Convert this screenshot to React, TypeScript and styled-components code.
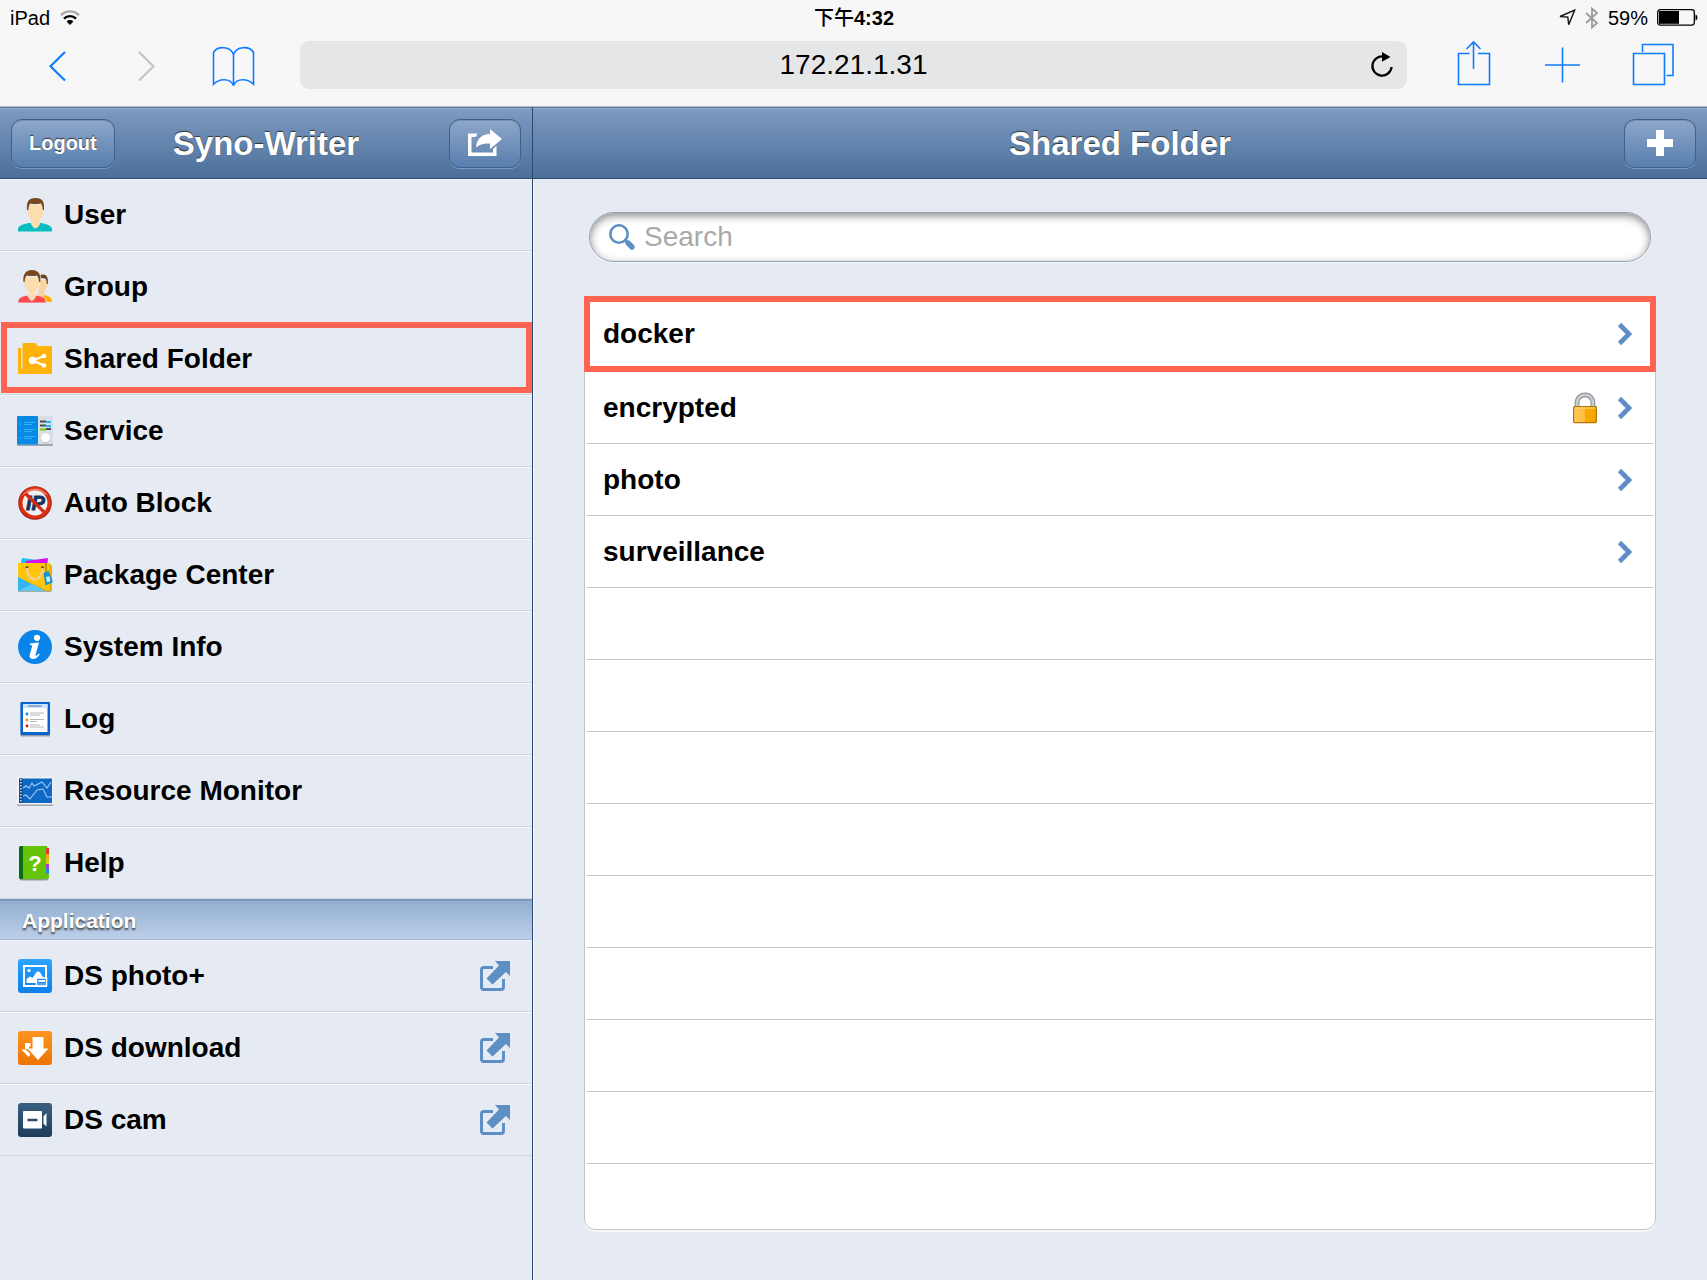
import React from "react";
import styled, { createGlobalStyle, css } from "styled-components";

const GlobalStyle = createGlobalStyle`
  *, *::before, *::after { box-sizing: border-box; }
  body {
    margin: 0;
    background: #e6ebf3;
    color: #000;
    font-family: "Liberation Sans", "Noto Sans CJK TC", Helvetica, Arial, sans-serif;
  }
  svg { display: block; flex: none; overflow: visible; }
  button, input { font: inherit; }
  a { color: inherit; text-decoration: none; }
  ul { list-style: none; margin: 0; padding: 0; }
`;

const ACCENT = "#0f7bff";
const STEEL = "#5d8ec4";

/* ---------- page ---------- */

const Page = styled.div`
  display: flex;
  flex-direction: column;
  min-height: 100vh;
`;

const Chrome = styled.header`
  background: #f7f7f7;
  border-bottom: 1px solid #b4b9c6;
`;

const StatusBar = styled.div`
  display: grid;
  grid-template-columns: 1fr auto 1fr;
  align-items: center;
  height: 32px;
  padding: 3px 9px 0 10px;
  font-size: 20px;
  line-height: 24px;
`;

const StatusGroup = styled.div<{ $end?: boolean }>`
  display: flex;
  align-items: center;
  gap: ${(p) => (p.$end ? 9 : 10)}px;
  justify-content: ${(p) => (p.$end ? "flex-end" : "flex-start")};
`;

const Clock = styled.time`
  font-weight: 500;
  b { font-weight: 700; }
`;

const Toolbar = styled.div`
  display: flex;
  gap: 22px;
  padding: 9px 14px 17px;
`;

const ToolGroup = styled.div`
  display: flex;
`;

const ToolButton = styled.button`
  display: flex;
  align-items: center;
  justify-content: center;
  width: 88px;
  height: 48px;
  padding: 0;
  border: 0;
  background: none;
  color: ${ACCENT};

  &:disabled { color: #c3c3c3; }
`;

const AddressBar = styled.div`
  display: flex;
  flex: 1;
  align-items: center;
  height: 48px;
  padding: 0 14px 0 36px;
  border-radius: 9px;
  background: #e5e6e8;
`;

const AddressInput = styled.input`
  flex: 1;
  min-width: 0;
  padding: 0;
  border: 0;
  outline: 0;
  background: none;
  color: #000;
  font-size: 28px;
  line-height: 32px;
  text-align: center;
`;

const ReloadButton = styled.button`
  display: flex;
  padding: 0;
  border: 0;
  background: none;
  color: #000;
`;

const Workspace = styled.div`
  display: flex;
  flex: 1;
`;

const Sidebar = styled.aside`
  display: flex;
  flex-direction: column;
  flex: none;
  width: 533px;
  border-right: 1px solid #2a4a72;
`;

const Main = styled.main`
  display: flex;
  flex: 1;
  flex-direction: column;
  min-width: 0;
  box-shadow: inset 1px 0 #f5f7fa;
`;

const TitleBar = styled.div`
  display: grid;
  grid-template-columns: 1fr auto 1fr;
  align-items: center;
  height: 72px;
  padding: 0 11px;
  border-top: 1px solid #5f7ca6;
  border-bottom: 1px solid #2c4a73;
  background: linear-gradient(#7d9bc3, #4b6f99);
  box-shadow: inset 0 1px #8fa9cc;
`;

const Title = styled.h1`
  grid-column: 2;
  margin: 0;
  padding-top: 1px;
  color: #fff;
  font-size: 33px;
  font-weight: 700;
  line-height: 38px;
  text-shadow: 0 -1px 1px #333;
`;

const BarButton = styled.button<{ $end?: boolean }>`
  display: flex;
  align-items: center;
  justify-content: center;
  justify-self: ${(p) => (p.$end ? "end" : "start")};
  min-width: 72px;
  height: 49px;
  padding: 0 17px;
  border: 1px solid #3f6088;
  border-radius: 11px;
  background: linear-gradient(#8ea7c9, #587fb0);
  box-shadow: 0 1px #7f9cc0, inset 0 1px #7792b8;
  color: #fff;
  font-size: 20px;
  font-weight: 700;
  text-shadow: 0 -1px 1px #333;
`;

/* ---------- sidebar ---------- */

const Highlight = css`
  &::after {
    content: "";
    position: absolute;
    border: 6px solid #ff6352;
    pointer-events: none;
    z-index: 1;
  }
`;

const NavRow = styled.li<{ $marked?: boolean }>`
  position: relative;
  height: 72px;
  border-bottom: 1px solid #cfd6e1;
  box-shadow: inset 0 1px #f5f7fb;
  ${(p) => p.$marked && Highlight}
  &::after { inset: -1px 0 1px 1px; }
`;

const NavLink = styled.a`
  display: flex;
  align-items: center;
  gap: 12px;
  height: 100%;
  padding: 0 22px 0 18px;
  font-size: 28px;
  font-weight: 700;
  line-height: 32px;
`;

const NavLabel = styled.span`
  flex: 1;
`;

const SectionHeading = styled.h2`
  height: 41px;
  margin: 0;
  padding-left: 22px;
  border-top: 2px solid #7b98bf;
  border-bottom: 1px solid #9db5d6;
  background: linear-gradient(#93aed0, #bccfe9);
  color: #fff;
  font-size: 21px;
  font-weight: 700;
  line-height: 40px;
  text-shadow: 0 2px 2px #444;
`;

/* ---------- folder list ---------- */

const Content = styled.div`
  display: flex;
  flex-direction: column;
  gap: 34px;
  padding: 33px 51px 49px;
`;

const SearchBox = styled.label`
  display: flex;
  align-items: center;
  gap: 9px;
  height: 50px;
  margin: 0 5px;
  padding: 0 19px;
  border: 1px solid #96a0aa;
  border-radius: 25px;
  background: #fff;
  box-shadow: inset 0 3px 9px rgba(0, 0, 0, 0.45), 0 1px #f4f6fa;
`;

const SearchInput = styled.input`
  flex: 1;
  min-width: 0;
  padding: 0;
  border: 0;
  outline: 0;
  background: none;
  font-size: 28px;
  line-height: 32px;

  &::placeholder { color: #a9a9a9; opacity: 1; }
`;

const FolderList = styled.ul`
  padding: 0 2px;
  border: 1px solid #c3c6ca;
  border-radius: 11px;
  background: #fff;
  box-shadow: 0 2px #f6f8fb;
`;

const FolderRow = styled.li<{ $marked?: boolean }>`
  position: relative;
  height: 72px;
  border-bottom: 1px solid #c8c8c8;

  &:first-child { height: 75px; }
  &:last-child { height: 65px; border-bottom: 0; }
  ${(p) => p.$marked && Highlight}
  &::after { inset: -1px -3px; }
`;

const FolderLink = styled.a`
  display: flex;
  align-items: center;
  gap: 21px;
  height: 100%;
  padding: 0 21px 0 16px;
  font-size: 28px;
  font-weight: 700;
  line-height: 32px;
`;

const FolderName = styled.span`
  flex: 1;
`;

/* ---------- status icons ---------- */

const WifiIcon = () => (
  <svg width="20" height="16" viewBox="0 0 20 16" fill="none">
    <path d="M1 5.2C6 .2 14 .2 19 5.2" stroke="#a6a6a6" strokeWidth="2.2" />
    <path d="M4 8.6c3.300-3.300 8.700-3.300 12 0" stroke="#000" strokeWidth="2.400" />
    <path d="M6.600 11.400c2-1.800 4.800-1.800 6.800 0L10 15z" fill="#000" />
  </svg>
);

const LocationIcon = () => (
  <svg width="17" height="17" viewBox="0 0 17 17" fill="none" stroke="#111" strokeWidth="1.400">
    <path d="M15.600 1.200 1 7.500l7.800.6.900 7.600z" strokeLinejoin="miter" />
  </svg>
);

const BluetoothIcon = () => (
  <svg width="14" height="22" viewBox="0 0 14 22" fill="none" stroke="#9b9b9b" strokeWidth="1.800">
    <path d="M1 6l11 10-5 4.500V1.500L12 6 1 16" />
  </svg>
);

const BatteryIcon = () => (
  <svg width="41" height="17" viewBox="0 0 41 17">
    <rect x=".7" y=".7" width="36.600" height="15.400" rx="2.500" fill="none" stroke="#000" strokeWidth="1.300" />
    <rect x="2" y="2" width="20" height="12.800" fill="#000" />
    <path d="M38.500 5.500c2.600.6 2.600 5.400 0 6z" fill="#000" />
  </svg>
);

/* ---------- browser icons ---------- */

const toolStroke = { fill: "none", stroke: "currentColor", strokeWidth: 1.6 };

const BackIcon = () => (
  <svg width="48" height="48" viewBox="0 0 48 48" {...toolStroke} strokeWidth="2.200">
    <path d="M31 11 16.500 25.200 31 39.500" />
  </svg>
);
const ForwardIcon = () => (
  <svg width="48" height="48" viewBox="0 0 48 48" {...toolStroke} strokeWidth="2.200">
    <path d="M17 11l14.500 14.200L17 39.500" />
  </svg>
);
const BookIcon = () => (
  <svg width="48" height="48" viewBox="0 0 48 48" {...toolStroke}>
    <path d="M23.500 45V13.500C20.500 4.500 7 5 3.500 11.500v31.800C9 37.500 20 36.500 23.500 44.500zM23.500 45V13.500C26.500 4.500 40 5 43.500 11.500v31.800C38 37.500 27 36.500 23.500 44.500z" />
  </svg>
);
const ShareIcon = () => (
  <svg width="48" height="48" viewBox="0 0 48 48" {...toolStroke}>
    <path d="M20.500 12.500h-11v31h31v-31h-11.500M24.500 1v27M17.500 8l7-7 7 7" />
  </svg>
);
const AddTabIcon = () => (
  <svg width="48" height="48" viewBox="0 0 48 48" {...toolStroke}>
    <path d="M25.500 6.500v35M8 24h35" />
  </svg>
);
const TabsIcon = () => (
  <svg width="48" height="48" viewBox="0 0 48 48" {...toolStroke}>
    <path d="M8.500 12.500h31v31h-31zM17.500 11V3.500h30.500v31H41.500" />
  </svg>
);
const ReloadIcon = () => (
  <svg width="22" height="26" viewBox="0 0 22 26" fill="none">
    <path d="M12.500 4.500A9.600 9.600 0 1 0 20.600 15" stroke="#000" strokeWidth="2.300" />
    <path d="M11 0l8.500 5-8.500 4.800z" fill="#000" />
  </svg>
);

/* ---------- title bar icons ---------- */

const ForwardBoxIcon = () => (
  <svg width="34" height="28" viewBox="0 0 34 28" fill="#fff">
    <path d="M0 4.500h9V6L7.500 8H3.500v15.500h21.500V20l3.500-3.500V27H0z" />
    <path d="M22 0l12 10-12 10v-5.500c-6-.5-10.500 1-14 4C8.500 11 13 5 22 5z" />
  </svg>
);
const PlusIcon = () => (
  <svg width="26" height="26" viewBox="0 0 26 26">
    <path d="M9 0h8v9h9v8h-9v9H9v-9H0V9h9z" fill="#fff" />
  </svg>
);

/* ---------- sidebar icons ---------- */

const Tile: React.FC<{ children: React.ReactNode }> = ({ children }) => (
  <svg width="34" height="34" viewBox="0 0 34 34" aria-hidden="true">
    {children}
  </svg>
);

const UserIcon = () => (
  <Tile>
    <path d="M0 33.500v-2c0-4 5-5.500 11-6.500h12c6 1 11 2.500 11 6.500v2z" fill="#08bdbd" />
    <path d="M10 7h15l.5 7c-.4 4-2.500 6-3.500 8v4c-1 2.500-3 4-4.500 4.500-1.500-.5-3.500-2-4.500-4.500v-4c-1-2-3-4-3.500-8z" fill="#fddcae" />
    <path d="M9 12C8.500 4 10 0 17.500 0S26.500 4 26 12h-1.200c0-3-.8-5-2-6.500-3 .8-8 .8-10.600 0C11 7 10.500 9 10.400 12z" fill="#79481f" />
  </Tile>
);
const GroupIcon = () => (
  <Tile>
    <path d="M26 25c4 .8 8 2 8 6.500V32h-5.500c-.3-2.500-2-4-4.500-5z" fill="#ffb000" />
    <path d="M22 10l7.500.5c1 4-.5 7-3 10v4.500L24 27l-4-2z" fill="#f9d3a0" />
    <path d="M22.500 5c5-1.500 8 .5 7.300 9h-1c0-2.500-.5-4-1.500-5.500L23 8z" fill="#6a4220" />
    <path d="M0 33v-1.500C0 27 5 26 10 25h8c5 1 10 2 10 6.500V33z" fill="#ff4d4f" stroke="#e6ebf3" strokeWidth=".8" />
    <path d="M6 7h15.500c.8 8-.5 11-3.800 14.500V26c-1 2.500-2.500 4-3.900 4.500C12.500 30 11 28.500 10 26v-4.500C6.500 18 5.200 14 6 7z" fill="#fddcae" stroke="#e6ebf3" strokeWidth=".8" />
    <path d="M5.500 12C4.500 4 8 0 14 0s9.500 4 8.200 12H21c0-3-.8-5-2-6.500-3 .8-7.500.8-10.300 0C7.300 7 6.700 9 6.700 12z" fill="#79481f" />
  </Tile>
);
const SharedFolderIcon = () => (
  <Tile>
    <path d="M0 6.500Q0 6 1 6h2.300v21H4.500V3Q4.500 1 6 1h12l1.500 3H33q1 0 1 1v26q0 1-1 1H1q-1 0-1-1z" fill="#ffb20a" />
    <path d="M14.500 18.500 26 14M14.500 18.500l11.500 5" stroke="#fff" strokeWidth="2" />
    <circle cx="14.500" cy="18.500" r="3.700" fill="#fff" />
    <circle cx="26" cy="14" r="2.300" fill="#fff" />
    <circle cx="26" cy="23.500" r="2.300" fill="#fff" />
  </Tile>
);
const ServiceIcon = () => (
  <Tile>
    <rect x="-1" y="3" width="36" height="29" rx="1" fill="#a0a6ac" />
    <rect x="19" y="2" width="16" height="28" rx="1" fill="#d9dee4" />
    <rect x="-1" y="2" width="21" height="28.500" rx="1" fill="#068ae6" />
    <path d="M1 10h2M6 8.500h11M6 10.500h8M1 17h2M6 15.500h11M6 17.500h8M1 24h2M6 22.500h11M6 24.500h8" stroke="#3fb2fa" strokeWidth=".9" />
    <path d="M22 7.500h6M22 11.500h6M28 15h5" stroke="#47505a" strokeWidth="2" />
    <path d="M28 8h5M28 12h5" stroke="#22b7f5" strokeWidth="2.200" />
    <path d="M22 15.500h6" stroke="#71d117" strokeWidth="2.200" />
    <circle cx="27.500" cy="24.500" r="4.500" fill="#a9b0b7" />
    <circle cx="27.500" cy="23.800" r="4.500" fill="#fff" />
  </Tile>
);
const AutoBlockIcon = () => (
  <Tile>
    <circle cx="17" cy="17" r="16.800" fill="#a52015" />
    <circle cx="17" cy="16.700" r="15.900" fill="#da2f12" />
    <path d="M4 10a15 15 0 0 1 26 0c-6-5-20-5-26 0z" fill="#ee7768" />
    <circle cx="17" cy="17" r="12.500" fill="#f1f0ef" />
    <text x="17.500" y="24" textAnchor="middle" fontSize="20" fontWeight="700" fontStyle="italic" fill="#17305f" stroke="#17305f" strokeWidth=".8">IP</text>
    <path d="M7.500 7.500l19 19" stroke="#d42b12" strokeWidth="3.200" />
  </Tile>
);
const PackageIcon = () => (
  <Tile>
    <path d="M4 0l15 2-1 6H2z" fill="#19c3ee" />
    <path d="M8 3l22-3-1 9H7z" fill="#d80df0" />
    <path d="M0 32h33v2H0z" fill="#a9a9a4" />
    <path d="M0 5h31.500L34 8v25H0z" fill="#e2b10c" />
    <path d="M0 5h31.500v28L0 19z" fill="#ffc60d" />
    <path d="M0 19l27 14H0z" fill="#35b4f0" />
    <path d="M0 33l14-7 13 7z" fill="#5cc9fb" />
    <circle cx="9" cy="9.500" r="1.500" fill="#704a0c" />
    <circle cx="24.500" cy="9.500" r="1.500" fill="#704a0c" />
    <path d="M9 10c0 15 15.500 15 15.500 0" fill="none" stroke="#f6cf9c" strokeWidth="2.200" />
    <path d="M28 5v9" stroke="#7b6a22" />
    <path d="M25.500 15l5-2 4.500 11-7.500 3.500z" fill="#1393d4" />
    <path d="M28 19l3.500-.8.800 5-3.300 1z" fill="#d5f1ff" />
  </Tile>
);
const InfoIcon = () => (
  <Tile>
    <circle cx="17" cy="17" r="17" fill="#0a84e9" />
    <circle cx="19" cy="7.800" r="3.100" fill="#fff" />
    <path d="M12 13.500l9-1-3.500 12.200c-.3 1.300.6 1.300 1.500.5l1.800-1.700.9.800c-2.300 3.300-4.400 4.800-6.800 4.800-2.600 0-3.800-1.700-3.200-4l2.400-8.500c.3-1.200-.3-1.500-2.300-1.600z" fill="#fff" />
  </Tile>
);
const LogIcon = () => (
  <Tile>
    <rect x="2.500" y="1" width="29.500" height="33.500" rx="1" fill="#969ba2" />
    <rect x="2.500" y="0" width="29.500" height="33" rx="1" fill="#0864cf" />
    <path d="M5 2h24.500v28H5z" fill="#fff" />
    <path d="M5 2h24.500v4H5z" fill="#cfe5fb" />
    <path d="M10 4h14" stroke="#7f9dc0" strokeWidth="1.500" />
    <circle cx="9" cy="12" r="1.400" fill="#0b84ee" />
    <circle cx="9" cy="18" r="1.400" fill="#f58a0b" />
    <circle cx="9" cy="24" r="1.400" fill="#d80f0f" />
    <path d="M12 11h14M12 13h10M12 17.500h14M12 19.500h7M12 23h10M12 25h14" stroke="#b3b7bb" />
  </Tile>
);
const MonitorIcon = () => (
  <Tile>
    <rect x="-1" y="3.500" width="36" height="28.500" fill="#9fa5ab" />
    <rect x="-1" y="3" width="36" height="27.500" fill="#f1f3f5" />
    <rect x="1" y="4.500" width="33" height="24.500" fill="#0d69c4" />
    <rect x="1" y="4.500" width="3.500" height="24.500" fill="#12437c" />
    <path d="M2.800 5v24" stroke="#b9cde4" strokeWidth="1.800" strokeDasharray="1.500 1.500" />
    <path d="M5 14l3-2 3 2 3-5 2 3 8-4 5 6 4-6M5 22l3-1 4 4 7-9 6-1 4 8h5" fill="none" stroke="#9fcaf5" strokeWidth="1.100" />
  </Tile>
);
const HelpIcon = () => (
  <Tile>
    <rect x="1.500" y="1" width="29" height="33.500" rx="2" fill="#8f9b8c" />
    <path d="M27 2h4v6h-4z" fill="#e83030" />
    <path d="M27 8h4v5h-4z" fill="#f8a018" />
    <path d="M27 13h4v5h-4z" fill="#d4d413" />
    <path d="M27 18h4v5h-4z" fill="#a33fd2" />
    <path d="M27 23h4v5h-4z" fill="#1b8fe6" />
    <path d="M1 2q0-2 2-2h26v2l-1 1v24l3 2v2q0 2-2 2H3q-2 0-2-2z" fill="#66c408" />
    <path d="M1 2q0-2 2-2h2v33H3q-2 0-2-2z" fill="#0b6a12" />
    <text x="17" y="25" textAnchor="middle" fontSize="22" fontWeight="700" fill="#fff">?</text>
  </Tile>
);

const AppTile: React.FC<{ id: string; from: string; to: string; children: React.ReactNode }> = ({ id, from, to, children }) => (
  <Tile>
    <defs>
      <linearGradient id={id} x1="0" y1="0" x2="0" y2="1">
        <stop offset="0" stopColor={from} />
        <stop offset="1" stopColor={to} />
      </linearGradient>
    </defs>
    <rect width="34" height="34" rx="3" fill={`url(#${id})`} />
    {children}
  </Tile>
);
const PhotoIcon = () => (
  <AppTile id="photo-tile" from="#2ea3ff" to="#0c80e8">
    <rect x="6" y="7" width="22" height="20" fill="none" stroke="#fff" strokeWidth="2" />
    <circle cx="11" cy="11.500" r="1.600" fill="#fff" />
    <path d="M8.500 24v-4l3.500-2.500 2.500 1.500 4-6c1.500-1 3-.5 4 1l3 5v2H18v3z" fill="#fff" />
    <rect x="18.500" y="19" width="10" height="8" fill="#1788ec" stroke="#fff" strokeWidth="1.600" />
    <path d="M20.500 22h6.500" stroke="#fff" strokeWidth="2" />
    <path d="M20.500 25h6.500" stroke="#fff" strokeDasharray="1 1" />
  </AppTile>
);
const DownloadIcon = () => (
  <AppTile id="download-tile" from="#ff9420" to="#ec7403">
    <path d="M14.500 6h11v11.500h5L20 29 9.500 17.500h5z" fill="#fff" />
    <path d="M7 12h5.500v3.500H11V18H7.500l5 5.500-2 2.500L3.500 18.500H7z" fill="#fff" />
  </AppTile>
);
const CamIcon = () => (
  <AppTile id="cam-tile" from="#3a5f81" to="#1e3d5c">
    <rect x="5" y="8" width="19" height="17.500" rx="1" fill="#fff" />
    <path d="M9.500 17h10" stroke="#2a4b6b" strokeWidth="2.500" />
    <path d="M25.500 13.500 28.500 10v13.500l-3-3z" fill="#fff" />
  </AppTile>
);

const OpenIcon = () => (
  <svg width="30" height="30" viewBox="0 0 30 30" aria-hidden="true">
    <path d="M13 6.500H4Q1.500 6.500 1.500 9v17q0 2.500 2.500 2.500h17q2.500 0 2.500-2.500v-8" fill="none" stroke={STEEL} strokeWidth="3" />
    <path d="M15 0h15v15l-4-4-13.500 12.500L6.500 17.500 19 4.500z" fill={STEEL} />
  </svg>
);

/* ---------- list icons ---------- */

const SearchIcon = () => (
  <svg width="26" height="26" viewBox="0 0 26 26" fill="none" stroke={STEEL} aria-hidden="true">
    <circle cx="10" cy="10" r="8.700" strokeWidth="2.600" />
    <path d="M16.200 16.200 19 19" strokeWidth="3" />
    <path d="M19 19l4 4" strokeWidth="5.400" strokeLinecap="round" />
  </svg>
);
const ChevronIcon = () => (
  <svg width="14" height="22" viewBox="0 0 14 22" fill="none" aria-hidden="true">
    <path d="M1.500 1.500 11 11l-9.500 9.500" stroke={STEEL} strokeWidth="4.600" />
  </svg>
);
const LockIcon = () => (
  <svg width="24" height="32" viewBox="0 0 24 32" role="img" aria-label="Encrypted">
    <defs>
      <linearGradient id="lock-body">
        <stop offset="0" stopColor="#fdc95a" />
        <stop offset=".48" stopColor="#fcbd3a" />
        <stop offset=".5" stopColor="#f8aa05" />
        <stop offset="1" stopColor="#f6a600" />
      </linearGradient>
    </defs>
    <path d="M4 16v-5C4 7 7 2.800 12 2.800S20 7 20 11v5" fill="none" stroke="#85898d" strokeWidth="4.800" />
    <path d="M4 16v-5C4 7 7 2.800 12 2.800S20 7 20 11v5" fill="none" stroke="#c9cdd1" strokeWidth="2.800" />
    <rect x=".6" y="14.600" width="22.800" height="16" rx="1" fill="url(#lock-body)" stroke="#b37505" strokeWidth="1.200" />
    <path d="M2 16h20" stroke="#ffe09a" />
  </svg>
);

/* ---------- data ---------- */

const systemItems = [
  { label: "User", Icon: UserIcon },
  { label: "Group", Icon: GroupIcon },
  { label: "Shared Folder", Icon: SharedFolderIcon, marked: true },
  { label: "Service", Icon: ServiceIcon },
  { label: "Auto Block", Icon: AutoBlockIcon },
  { label: "Package Center", Icon: PackageIcon },
  { label: "System Info", Icon: InfoIcon },
  { label: "Log", Icon: LogIcon },
  { label: "Resource Monitor", Icon: MonitorIcon },
  { label: "Help", Icon: HelpIcon },
];

const appItems = [
  { label: "DS photo+", Icon: PhotoIcon },
  { label: "DS download", Icon: DownloadIcon },
  { label: "DS cam", Icon: CamIcon },
];

const folders = [
  { name: "docker", marked: true },
  { name: "encrypted", locked: true },
  { name: "photo" },
  { name: "surveillance" },
];

const EMPTY_ROWS = 9;

export default function App() {
  return (
    <>
      <GlobalStyle />
      <Page>
        <Chrome>
          <StatusBar>
            <StatusGroup>
              <span>iPad</span>
              <WifiIcon />
            </StatusGroup>
            <Clock>下午<b>4:32</b></Clock>
            <StatusGroup $end>
              <LocationIcon />
              <BluetoothIcon />
              <span>59%</span>
              <BatteryIcon />
            </StatusGroup>
          </StatusBar>
          <Toolbar>
            <ToolGroup>
              <ToolButton aria-label="Back"><BackIcon /></ToolButton>
              <ToolButton aria-label="Forward" disabled><ForwardIcon /></ToolButton>
              <ToolButton aria-label="Bookmarks"><BookIcon /></ToolButton>
            </ToolGroup>
            <AddressBar>
              <AddressInput aria-label="Address" defaultValue="172.21.1.31" />
              <ReloadButton aria-label="Reload"><ReloadIcon /></ReloadButton>
            </AddressBar>
            <ToolGroup>
              <ToolButton aria-label="Share"><ShareIcon /></ToolButton>
              <ToolButton aria-label="New tab"><AddTabIcon /></ToolButton>
              <ToolButton aria-label="Tabs"><TabsIcon /></ToolButton>
            </ToolGroup>
          </Toolbar>
        </Chrome>
        <Workspace>
          <Sidebar>
            <TitleBar>
              <BarButton>Logout</BarButton>
              <Title>Syno-Writer</Title>
              <BarButton $end aria-label="Go to"><ForwardBoxIcon /></BarButton>
            </TitleBar>
            <nav>
              <ul>
                {systemItems.map(({ label, Icon, marked }) => (
                  <NavRow key={label} $marked={marked}>
                    <NavLink href="#">
                      <Icon />
                      <NavLabel>{label}</NavLabel>
                    </NavLink>
                  </NavRow>
                ))}
              </ul>
              <SectionHeading>Application</SectionHeading>
              <ul>
                {appItems.map(({ label, Icon }) => (
                  <NavRow key={label}>
                    <NavLink href="#">
                      <Icon />
                      <NavLabel>{label}</NavLabel>
                      <OpenIcon />
                    </NavLink>
                  </NavRow>
                ))}
              </ul>
            </nav>
          </Sidebar>
          <Main>
            <TitleBar>
              <Title>Shared Folder</Title>
              <BarButton $end aria-label="Add"><PlusIcon /></BarButton>
            </TitleBar>
            <Content>
              <SearchBox>
                <SearchIcon />
                <SearchInput type="text" placeholder="Search" aria-label="Search" />
              </SearchBox>
              <FolderList>
                {folders.map(({ name, marked, locked }) => (
                  <FolderRow key={name} $marked={marked}>
                    <FolderLink href="#">
                      <FolderName>{name}</FolderName>
                      {locked && <LockIcon />}
                      <ChevronIcon />
                    </FolderLink>
                  </FolderRow>
                ))}
                {Array.from({ length: EMPTY_ROWS }, (_, i) => (
                  <FolderRow key={i} aria-hidden="true" />
                ))}
              </FolderList>
            </Content>
          </Main>
        </Workspace>
      </Page>
    </>
  );
}
